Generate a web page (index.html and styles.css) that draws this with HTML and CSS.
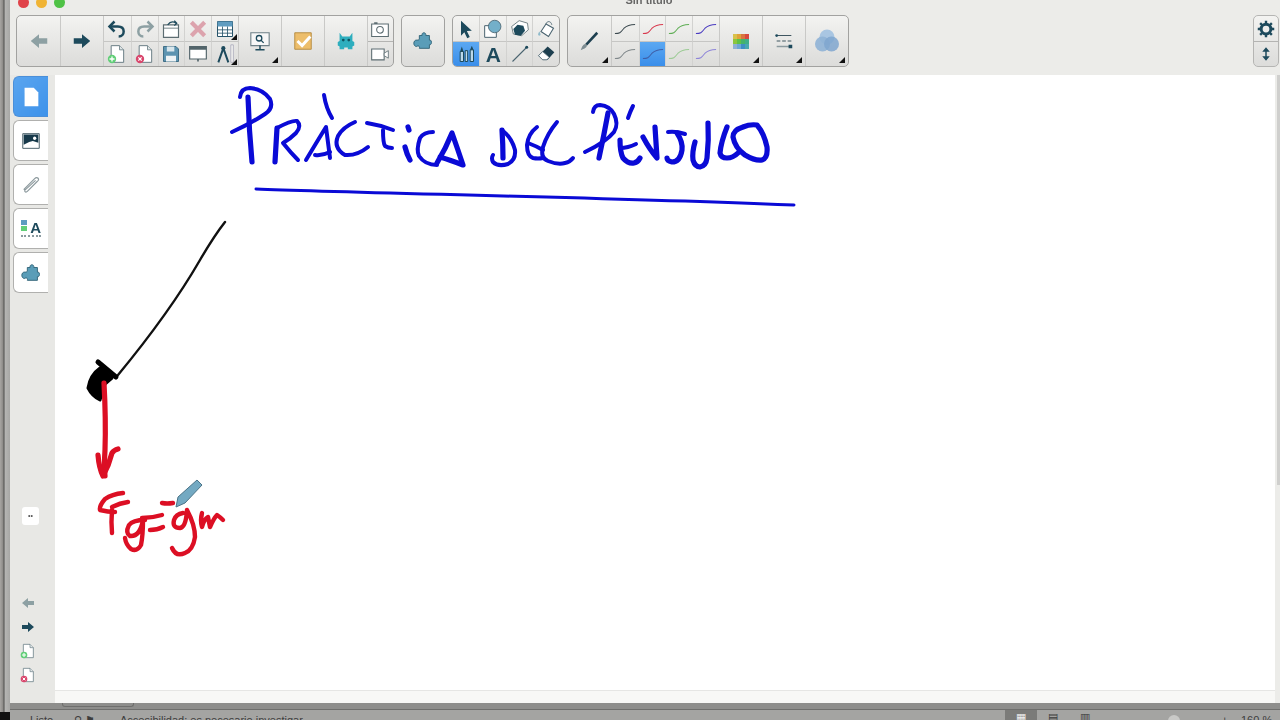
FILE: index.html
```html
<!DOCTYPE html>
<html lang="es">
<head>
<meta charset="utf-8">
<title>Sin título</title>
<link rel="stylesheet" href="styles.css">
</head>
<body>
<svg class="defs" width="0" height="0" aria-hidden="true">
  <defs>
    <symbol id="arrow" viewBox="0 0 24 24"><path d="M3 12 12 4.500V9h9v6h-9v4.500z"/></symbol>
    <symbol id="undo" viewBox="0 0 24 24"><path d="M9 3 3 9l6 6" fill="none" stroke="currentColor" stroke-width="3"/><path d="M4 9h9c5 0 7 3 7 6s-2 6-6 6" fill="none" stroke="currentColor" stroke-width="3"/></symbol>
    <symbol id="page" viewBox="0 0 24 24"><path d="M5 2h10l5 5v15H5z" fill="#fff" stroke="#6b7f86" stroke-width="1.200"/><path d="M15 2v5h5" fill="#dfe5e6" stroke="#6b7f86"/></symbol>
    <symbol id="pageadd" viewBox="0 0 24 24"><use href="#page"/><circle cx="6" cy="18" r="5" fill="#62cf78"/><path d="M3 18h6M6 15v6" stroke="#fff" stroke-width="1.600"/></symbol>
    <symbol id="pagedel" viewBox="0 0 24 24"><use href="#page"/><circle cx="6" cy="18" r="5" fill="#d9476d"/><path d="m4 16 4 4m0-4-4 4" stroke="#fff" stroke-width="1.500"/></symbol>
    <symbol id="puzzle" viewBox="0 0 24 24"><path d="M8 6h3c-1-4 5-4 4 0h4v5c3-1 3 6 0 5v4H8c1-3-2-3-3-2-4 0-4-7 0-7 1 0 3 0 3-1z" fill="#5a9db8" stroke="#2f6276"/></symbol>
    <symbol id="squiggle" viewBox="0 0 24 24"><path d="M1 17c6 0 6-1 10-6 3-3 6-4 12-4" fill="none" stroke="currentColor" stroke-width="1.100"/></symbol>
  </defs>
</svg>

<div class="window">
  <div class="edge"></div>
  <div class="app">
    <div class="titlebar">
      <div class="lights"><span class="light red"></span><span class="light amber"></span><span class="light green"></span></div>
      <span class="title">Sin título</span>
    </div>

    <div class="toolbar">
      <div class="group">
        <div class="big"><svg class="i22 c-grey"><use href="#arrow"/></svg></div>
        <div class="big"><svg class="i22 c-dark flip"><use href="#arrow"/></svg></div>
        <div class="grid cols5">
          <div class="cell"><svg class="i20 c-dark"><use href="#undo"/></svg></div>
          <div class="cell"><svg class="i20 c-grey flip"><use href="#undo"/></svg></div>
          <div class="cell"><svg class="i20" viewBox="0 0 24 24"><path d="M3 7h18v15H3z" fill="#fff" stroke="#5d6d72" stroke-width="1.400"/><path d="M3 11h18" stroke="#5d6d72"/><path d="M8 7c3-4 7-4 10-2M16 2l3 3-3 3" fill="none" stroke="#1d4a5c" stroke-width="1.400"/></svg></div>
          <div class="cell"><svg class="i20" viewBox="0 0 24 24"><path d="m4 4 16 16M20 4 4 20" stroke="#dca3ad" stroke-width="5"/></svg></div>
          <div class="cell more"><svg class="i20" viewBox="0 0 24 24"><path d="M3 3h18v18H3z" fill="#fff" stroke="#27546a" stroke-width="1.200"/><path d="M3 3h18v6H3z" fill="#5f9cc0"/><path d="M3 13h18M3 17h18M9 9v12M15 9v12" stroke="#27546a"/></svg></div>
          <div class="cell"><svg class="i20"><use href="#pageadd"/></svg></div>
          <div class="cell"><svg class="i20"><use href="#pagedel"/></svg></div>
          <div class="cell"><svg class="i20" viewBox="0 0 24 24"><path d="M3 3h15l3 3v15H3z" fill="#5c93b0" stroke="#2d5f78"/><path d="M7 3h9v6H7z" fill="#d8e6ec"/><path d="M6 14h12v7H6z" fill="#eef3f5"/></svg></div>
          <div class="cell"><svg class="i20" viewBox="0 0 24 24"><path d="M2 3h20v15H2z" fill="#fff" stroke="#52646a" stroke-width="1.400"/><path d="M2 3h20v4H2z" fill="#52646a"/><path d="M12 18v3" stroke="#52646a" stroke-width="2"/></svg></div>
          <div class="cell more"><svg class="i20" viewBox="0 0 24 24"><path d="m10 5-6 17M10 5l6 17" fill="none" stroke="#1d4a5c" stroke-width="2.400"/><circle cx="10" cy="5" r="2.500" fill="#1d4a5c"/><path d="M19 1h3v21h-3z" fill="#f4f4f2" stroke="#aab"/></svg></div>
        </div>
        <div class="big more"><svg class="i22" viewBox="0 0 24 24"><path d="M2 3h20v14H2z" fill="#f7f7f7" stroke="#6e8087" stroke-width="1.200"/><circle cx="11" cy="9" r="3" fill="none" stroke="#1d4a5c" stroke-width="1.400"/><path d="m13 11 3 3" stroke="#1d4a5c" stroke-width="1.400"/><path d="M12 17v4M7 21.500h10" stroke="#1d4a5c" stroke-width="1.600"/></svg></div>
        <div class="big"><svg class="i22" viewBox="0 0 24 24"><path d="M3 3h18v18H3z" fill="#edbe6b" stroke="#b48a3e"/><path d="m6 12 5 5 9-10" fill="none" stroke="#fff" stroke-width="3.200"/></svg></div>
        <div class="big"><svg class="i22" viewBox="0 0 24 24"><path d="M5 3l3 4h8l3-4v9l2 1v4l-2 1v3h-5v-2h-4v2H5v-3l-2-1v-4l2-1z" fill="#2eaebe"/><circle cx="9" cy="11" r="1.500" fill="#0f5360"/><circle cx="15" cy="11" r="1.500" fill="#0f5360"/></svg></div>
        <div class="grid cols1">
          <div class="cell"><svg class="i20" viewBox="0 0 24 24"><path d="M2 6h20v15H2z" fill="#fff" stroke="#5d6d72" stroke-width="1.300"/><path d="M5 4h4v2H5z" fill="#5d6d72"/><circle cx="12" cy="13" r="4" fill="none" stroke="#5d6d72" stroke-width="1.300"/></svg></div>
          <div class="cell"><svg class="i20" viewBox="0 0 24 24"><path d="M2 6h15v13H2z" fill="#fff" stroke="#5d6d72" stroke-width="1.300"/><path d="m17 11 5-3v9l-5-3z" fill="#fff" stroke="#5d6d72"/></svg></div>
        </div>
      </div>

      <div class="group solo">
        <div class="big"><svg class="i22"><use href="#puzzle"/></svg></div>
      </div>

      <div class="group narrow">
        <div class="grid cols4">
          <div class="cell"><svg class="i20" viewBox="0 0 24 24"><path d="M6 2 19 14l-6 .5 3.500 7-3 1.500-3.500-7L6 20z" fill="#1d4a5c"/></svg></div>
          <div class="cell"><svg class="i20" viewBox="0 0 24 24"><path d="M2 8h14v14H2z" fill="#fff" stroke="#4b6470" stroke-width="1.200"/><circle cx="14" cy="9" r="7.500" fill="#73afc9" stroke="#4b6470"/></svg></div>
          <div class="cell"><svg class="i20" viewBox="0 0 24 24"><path d="m11 2 10 3 1 8-8 7-10-2-2-9z" fill="#fff" stroke="#5d6d72"/><path d="m9 7 7 1 2 6-5 6-7-1-2-7z" fill="#1d4a5c"/></svg></div>
          <div class="cell"><svg class="i20" viewBox="0 0 24 24"><path d="m12 6 9 5-6 10-9-6z" fill="#fff" stroke="#4b6470" stroke-width="1.300"/><path d="M12 6c1-4 6-4 7 1" fill="none" stroke="#4b6470"/><path d="M4 15c-2 3-2 5 0 5s2-2 0-5z" fill="#8fbacb"/></svg></div>
          <div class="cell on"><svg class="i20" viewBox="0 0 24 24"><path d="M5 9h4v12H5zM11 8h3v13h-3zM17 7h4v14h-4z" fill="#bcd8ea" stroke="#1d4a5c" stroke-width="1.200"/><path d="m7 3 2 6H5zM19 2l2 5h-4z" fill="#1d4a5c"/></svg></div>
          <div class="cell"><span class="tool-a">A</span></div>
          <div class="cell"><svg class="i20" viewBox="0 0 24 24"><path d="m3 21 18-18" stroke="#4b6470" stroke-width="1.300"/><circle cx="20" cy="4" r="1.800" fill="#1d4a5c"/></svg></div>
          <div class="cell"><svg class="i20" viewBox="0 0 24 24"><path d="m14 3 8 7-8 9H8l-5-5z" fill="#1d3f4f"/><path d="m3 14 5-5 8 7-3 3H8z" fill="#fff" stroke="#4b6470"/></svg></div>
        </div>
      </div>

      <div class="group">
        <div class="big more"><svg class="i22" viewBox="0 0 24 24"><path d="M20 2 8 15l2 2L22 4z" fill="#1d3f4f"/><path d="M8 15c-3 1-4 4-5 7 3-1 6-2 7-5z" fill="#7e8d92"/></svg></div>
        <div class="grid cols4">
          <div class="cell"><svg class="i22 c-ink"><use href="#squiggle"/></svg></div>
          <div class="cell"><svg class="i22 c-red"><use href="#squiggle"/></svg></div>
          <div class="cell"><svg class="i22 c-lime"><use href="#squiggle"/></svg></div>
          <div class="cell"><svg class="i22 c-violet"><use href="#squiggle"/></svg></div>
          <div class="cell"><svg class="i22 c-ink2"><use href="#squiggle"/></svg></div>
          <div class="cell on"><svg class="i22 c-sel"><use href="#squiggle"/></svg></div>
          <div class="cell"><svg class="i22 c-lime2"><use href="#squiggle"/></svg></div>
          <div class="cell"><svg class="i22 c-violet2"><use href="#squiggle"/></svg></div>
        </div>
        <div class="big more"><div class="palette"><i class="p1"></i><i class="p2"></i><i class="p3"></i><i class="p4"></i><i class="p5"></i><i class="p6"></i><i class="p7"></i><i class="p8"></i><i class="p9"></i><i class="p10"></i><i class="p11"></i><i class="p12"></i></div></div>
        <div class="big more"><svg class="i22" viewBox="0 0 24 24"><path d="M4 6h16" stroke="#3f5660" stroke-width="1.200"/><path d="M4 12h16" stroke="#3f5660" stroke-width="1.200" stroke-dasharray="4 2"/><path d="M4 18h16" stroke="#8b9a9f" stroke-width="1.400"/><circle cx="4" cy="6" r="1.500" fill="#1d4a5c"/><path d="M17 16h4v4h-4z" fill="#1d4a5c"/></svg></div>
        <div class="big more"><svg class="i26" viewBox="0 0 26 26"><circle cx="13" cy="9" r="7.500" fill="#a9c6e2"/><circle cx="8.500" cy="16" r="7.500" fill="#8fb3d6" opacity=".9"/><circle cx="17.500" cy="16" r="7.500" fill="#7fa6cf" opacity=".85"/></svg></div>
      </div>

      <div class="group side">
        <div class="grid cols1">
          <div class="cell"><svg class="i18" viewBox="0 0 24 24"><circle cx="12" cy="12" r="6.500" fill="none" stroke="#1d4a5c" stroke-width="4"/><path d="M12 1v5M12 18v5M1 12h5M18 12h5M4.200 4.200l3.500 3.500M16.300 16.300l3.500 3.500M19.800 4.200l-3.500 3.500M7.700 16.300l-3.500 3.500" stroke="#1d4a5c" stroke-width="3.200"/></svg></div>
          <div class="cell"><svg class="i18" viewBox="0 0 24 24"><path d="M12 6v12" stroke="#1d4a5c" stroke-width="2"/><path d="m7 9 5-6 5 6zM7 15l5 6 5-6z" fill="#1d4a5c"/></svg></div>
        </div>
      </div>
    </div>

    <div class="main">
      <aside class="panel">
        <div class="tab active"><svg class="i22" viewBox="0 0 24 24"><path d="M5 2h10l5 5v15H5z" fill="#fff"/></svg></div>
        <div class="tab"><svg class="i22" viewBox="0 0 24 24"><path d="M3 4h18v16H3z" fill="#fff" stroke="#3f5660"/><path d="M4 5h16v9l-6-2-4 1-6 3z" fill="#17394a"/><circle cx="16" cy="9" r="1.800" fill="#fff"/></svg></div>
        <div class="tab"><svg class="i22" viewBox="0 0 24 24"><path d="M4 17 16 5c3-3 6 1 3 3L8 19c-2 2-4-1-2-2L17 7" fill="none" stroke="#8d9a9e" stroke-width="1.300"/></svg></div>
        <div class="tab"><span class="tab-a"><i class="sw-blue"></i><i class="sw-green"></i>A</span></div>
        <div class="tab"><svg class="i22"><use href="#puzzle"/></svg></div>
        <div class="mini">••</div>
        <div class="nav">
          <svg class="i16 c-grey"><use href="#arrow"/></svg>
          <svg class="i16 c-dark flip"><use href="#arrow"/></svg>
          <svg class="i16"><use href="#pageadd"/></svg>
          <svg class="i16"><use href="#pagedel"/></svg>
        </div>
      </aside>

      <div class="content">
        <svg class="board" viewBox="55 75 1220 615" role="img" aria-label="Dibujo a mano: Práctica del péndulo">
          <g class="ink blue">
            <path class="fat" d="M248 97Q249 130 252 162"/>
            <path d="M240 97Q241 88 250 88 263 89 270 99 274 108 265 114 250 124 232 132"/>
            <path class="fat" d="M277 128Q276 146 275 162"/>
            <path d="M277 128Q292 120 297 121 302 126 296 133 290 139 283 143 291 153 298 160"/>
            <path d="M324 95Q326 108 332 118"/>
            <path d="M306 160Q318 140 326 127 328 142 330 158"/>
            <path d="M315 155Q322 156 330 152"/>
            <path d="M355 122Q343 127 338 136 333 148 345 155 357 156 368 147"/>
            <path d="M367 123Q380 125 393 130"/>
            <path d="M383 130Q383 143 385 146 388 148 392 148"/>
            <path class="fat" d="M408 127 409 130"/>
            <path class="fat" d="M405 147Q407 155 410 160"/>
            <path d="M433 132Q424 132 420 138 416 150 419 156 425 165 437 165"/>
            <path class="fat" d="M437 163Q446 148 452 133 458 150 463 165 450 160 440 157"/>
            <path class="fat" d="M502 130Q503 145 503 158"/>
            <path d="M502 130Q512 138 515 150 516 160 508 164 498 167 493 162 491 158 493 155"/>
            <path d="M537 127Q528 134 527 145 527 156 533 158 538 159 543 158"/>
            <path d="M528 143Q536 146 543 150"/>
            <path d="M557 122Q547 134 543 147 540 158 548 161 558 165 565 163 570 162 573 158"/>
            <path class="fat" d="M608 113Q604 135 599 158"/>
            <path d="M593 112Q594 105 600 105 610 106 614 114 619 124 614 132 606 142 585 152"/>
            <path d="M633 106Q630 112 628 118"/>
            <path class="fat" d="M620 140Q620 152 623 158 628 164 634 163 638 162 640 158"/>
            <path d="M620 148Q628 148 636 144"/>
            <path class="fat" d="M643 137Q650 150 657 158 656 142 655 127"/>
            <path d="M668 132Q676 131 685 134"/>
            <path class="fat" d="M677 133Q683 142 682 150 680 162 672 162 667 161 667 158"/>
            <path class="fat" d="M695 142Q692 152 693 160 695 167 700 167 706 166 707 158 709 140 708 123"/>
            <path class="fat" d="M727 127Q721 142 720 153 721 158 727 158 733 158 738 153"/>
            <path class="fat" d="M743 127Q733 130 733 137 735 148 745 155 755 161 762 160 768 158 767 147 764 133 757 125 750 124 743 127"/>
          </g>
          <path class="rule" d="M256 189C350 193 600 197 794 205"/>
          <path class="string" d="M225 222Q214 236 200 260 170 312 118 375"/>
          <g class="blob">
            <path d="M98 362 116 377"/>
            <path class="blob-fill" d="M100 368Q90 375 88 388 92 396 100 400L105 384 112 378z"/>
          </g>
          <g class="ink red">
            <path class="fat" d="M104 383Q106 420 105 450 104 465 105 476"/>
            <path class="fat" d="M98 455Q99 468 103 476 109 465 112 453 114 450 118 449"/>
            <path d="M123 493Q112 494 105 499 99 506 100 510 108 512 115 512"/>
            <path d="M112 507Q120 503 128 502"/>
            <path d="M112 510Q111 522 112 533"/>
            <path d="M145 520Q133 520 129 525 125 533 130 536 140 537 143 520 143 535 141 545 137 552 131 549 126 545 125 538"/>
            <path d="M142 518Q152 518 162 515"/>
            <path d="M150 530Q157 530 163 527"/>
            <path d="M162 503Q167 504 173 503"/>
            <path d="M183 513Q176 514 174 520 172 528 180 528 186 527 187 510 195 525 195 537 193 550 185 553 176 557 172 548"/>
            <path d="M202 513Q200 520 202 527 204 519 208 517 209 522 210 527 214 518 217 515 220 517 223 520"/>
          </g>
          <path class="pen" d="M178 497l19-17 5 5-17 18-9 4z"/>
        </svg>
        <div class="board-foot"></div>
      </div>
      <div class="scroll"><div class="thumb"></div></div>
    </div>

    <div class="sheetbar"><div class="sheetbar-thumb"></div></div>
    <footer class="status">
      <span class="listo">Listo</span>
      <span class="st-icons">⚲ ⚑</span>
      <span class="access">Accesibilidad: es necesario investigar</span>
      <div class="views"><span class="view current">▦</span><span class="view">▤</span><span class="view">▥</span></div>
      <div class="zoomer"><span>−</span><div class="track"><i></i></div><span>+</span></div>
      <span class="pct">160 %</span>
    </footer>
  </div>
</div>
</body>
</html>
```
FILE: styles.css
```css
* { box-sizing: border-box; }
html, body { margin: 0; height: 100%; overflow: hidden; }
body { background: #8f8f8d; font-family: "Liberation Sans", Arial, sans-serif; }
.defs { display: block; height: 0; }
.window { display: flex; height: 720px; width: 1280px; }
.edge {
  width: 10px;
  background: linear-gradient(90deg, #a8a6a3 0, #8c8a87 30%, #5c5c5a 38%, #b4b4b2 55%, #a7a7a5 100%);
  box-shadow: inset 0 -40px 0 -32px #111;
}
.app { flex: 1; min-width: 0; display: flex; flex-direction: column; background: #ecece9; }

.titlebar { height: 8px; overflow: hidden; display: flex; align-items: flex-end; position: relative; }
.lights { display: flex; gap: 7px; padding-left: 8px; }
.light { width: 11px; height: 11px; border-radius: 50%; }
.red { background: #e0434a; }
.amber { background: #f0b435; }
.green { background: #4fc246; }
.title { position: absolute; left: 613px; top: -6px; font-size: 11px; line-height: 13px; color: #454545; font-weight: 700; opacity: .8; width: 52px; text-align: center; }

.toolbar { height: 67px; padding: 7px 1px 7px 6px; display: flex; gap: 7px; align-items: flex-start; filter: blur(.35px); }
.group { display: flex; height: 52px; border: 1px solid #a2a2a0; border-radius: 5px; background: linear-gradient(#f3f3f1, #dcdcda); overflow: hidden; }
.solo { width: 44px; }
.solo .big { width: 42px; }
.narrow { width: 108px; }
.side { margin-left: auto; width: 26px; border-color: #b5b5b3; }
.big { position: relative; width: 43px; display: flex; align-items: center; justify-content: center; border-left: 1px solid #c9c9c7; }
.big:first-child { border-left: 0; }
.grid { display: grid; grid-template-rows: 1fr 1fr; border-left: 1px solid #c9c9c7; }
.group > .grid:first-child { border-left: 0; width: 100%; }
.cols5 { grid-template-columns: repeat(5, 26.800px); }
.cols4 { grid-template-columns: repeat(4, 26.750px); }
.narrow .cols4 { grid-template-columns: repeat(4, 1fr); }
.cols1 { grid-template-columns: 25px; }
.side .cols1 { grid-template-columns: 1fr; }
.cell { position: relative; display: flex; align-items: center; justify-content: center; border-left: 1px solid #d2d2d0; border-top: 1px solid #c6c6c4; }
.cell:nth-child(-n+5) { border-top: 0; }
.cols4 .cell:nth-child(5) { border-top: 1px solid #c6c6c4; }
.cols1 .cell:nth-child(2) { border-top: 1px solid #b4b4b2; }
.cols5 .cell:nth-child(5n+1), .cols4 .cell:nth-child(4n+1), .cols1 .cell { border-left: 0; }
.on { background: linear-gradient(#5ba8f2, #3a8eea); }
.more::after { content: ""; position: absolute; right: 3px; bottom: 3px; border: 3px solid transparent; border-right-color: #111; border-bottom-color: #111; }
.cell.more::after { right: 1px; bottom: 1px; }

svg.i16 { width: 16px; height: 16px; flex: none; }
svg.i18 { width: 18px; height: 18px; }
svg.i20 { width: 20px; height: 20px; }
svg.i22 { width: 22px; height: 22px; }
svg.i26 { width: 26px; height: 26px; }
.c-grey { color: #8da0a3; fill: #8da0a3; }
.c-dark { color: #1d4a5c; fill: #1d4a5c; }
.flip { transform: scaleX(-1); }
.c-ink { color: #3c4a50; }
.c-red { color: #d8394e; }
.c-lime { color: #5fae55; }
.c-violet { color: #4a3bc0; }
.c-ink2 { color: #80888b; }
.c-sel { color: #3f5fa8; }
.c-lime2 { color: #9ccb95; }
.c-violet2 { color: #8f86d8; }
.tool-a { font-size: 21px; font-weight: 700; line-height: 1; color: #1d4a5c; }

.palette { width: 16px; height: 15px; display: grid; grid-template-columns: repeat(4, 1fr); grid-template-rows: repeat(3, 1fr); }
.palette i { display: block; }
.p1 { background: #d9c14a; }
.p2 { background: #e0a23a; }
.p3 { background: #d8743f; }
.p4 { background: #d8483f; }
.p5 { background: #8cc63f; }
.p6 { background: #5fc14a; }
.p7 { background: #46b36a; }
.p8 { background: #3fae8a; }
.p9 { background: #8fb0d6; }
.p10 { background: #6ea6d6; }
.p11 { background: #3f8fc4; }
.p12 { background: #4aa8b0; }

.main { height: 628px; display: flex; }
.panel { width: 45px; flex: none; background: #e8e8e5; padding: 1px 0 0 3px; display: flex; flex-direction: column; gap: 3px; filter: blur(.3px); }
.tab { width: 35px; height: 41px; flex: none; background: #fff; border: 1px solid #b0b0ae; border-right: 0; border-radius: 6px 0 0 6px; display: flex; align-items: center; justify-content: center; }
.tab.active { background: linear-gradient(135deg, #5aa5ef, #3d92ea); border-color: #4b8fd8; }
.tab-a { position: relative; width: 20px; font-size: 15px; font-weight: 700; line-height: 1; color: #1d4a5c; text-align: right; border-bottom: 2px dotted #8a9a9f; }
.sw-blue, .sw-green { position: absolute; left: 0; width: 6px; height: 5px; }
.sw-blue { top: 0; background: #5d9cc0; }
.sw-green { top: 6px; background: #62cf78; }
.mini { margin: 211px 0 0 9px; width: 17px; height: 18px; background: #fff; border-radius: 3px; font-size: 7px; line-height: 18px; text-align: center; color: #555; flex: none; }
.nav { margin: 67px 0 0 7px; width: 17px; display: flex; flex-direction: column; gap: 8px; }
.content { width: 1220px; flex: none; display: flex; flex-direction: column; background: #fff; }
.board { display: block; width: 1220px; height: 615px; background: #fff; filter: blur(.4px); }
.board-foot { flex: 1; background: #f8f8f6; border-top: 1px solid #e6e6e4; }
.scroll { flex: 1; padding-left: 2px; }
.thumb { width: 3px; height: 410px; background: #cfcfcd; }

.ink { fill: none; stroke-linecap: round; stroke-linejoin: round; }
.blue { stroke: #0a0ad6; stroke-width: 4; }
.red { stroke: #dc0f24; stroke-width: 4.400; }
.ink .fat { stroke-width: 5.200; }
.rule { fill: none; stroke: #0a0ad6; stroke-width: 3; stroke-linecap: round; }
.string { fill: none; stroke: #111; stroke-width: 2.400; stroke-linecap: round; }
.blob { fill: none; stroke: #000; stroke-width: 5; stroke-linecap: round; stroke-linejoin: round; }
.blob .blob-fill { fill: #000; stroke-width: 3; }
.pen { fill: #73a9c2; stroke: #4b7488; stroke-width: 1; }

.sheetbar { height: 7px; background: #8e8e8c; border-bottom: 1px solid #6f6f6d; padding-left: 52px; }
.sheetbar-thumb { width: 72px; height: 4px; border: 1px solid #6f6f6d; border-top: 0; border-radius: 0 0 3px 3px; }
.status { flex: 1; background: #a4a4a2; display: flex; align-items: flex-start; font-size: 11px; line-height: 13px; color: #3d3d3d; padding-top: 4px; overflow: hidden; }
.listo { margin-left: 20px; width: 44px; }
.st-icons { width: 46px; }
.access { flex: 1; }
.views { display: flex; margin-top: -4px; }
.view { width: 32px; height: 20px; text-align: center; padding-top: 1px; }
.view.current { background: #7b7b79; color: #eee; }
.zoomer { display: flex; gap: 6px; width: 121px; margin-left: 6px; }
.track { position: relative; flex: 1; height: 2px; margin-top: 6px; background: #5f5f5d; }
.track i { position: absolute; left: 49px; top: -5px; width: 12px; height: 12px; border-radius: 50%; background: #c9c9c7; }
.pct { width: 52px; padding-left: 13px; white-space: nowrap; }
```
